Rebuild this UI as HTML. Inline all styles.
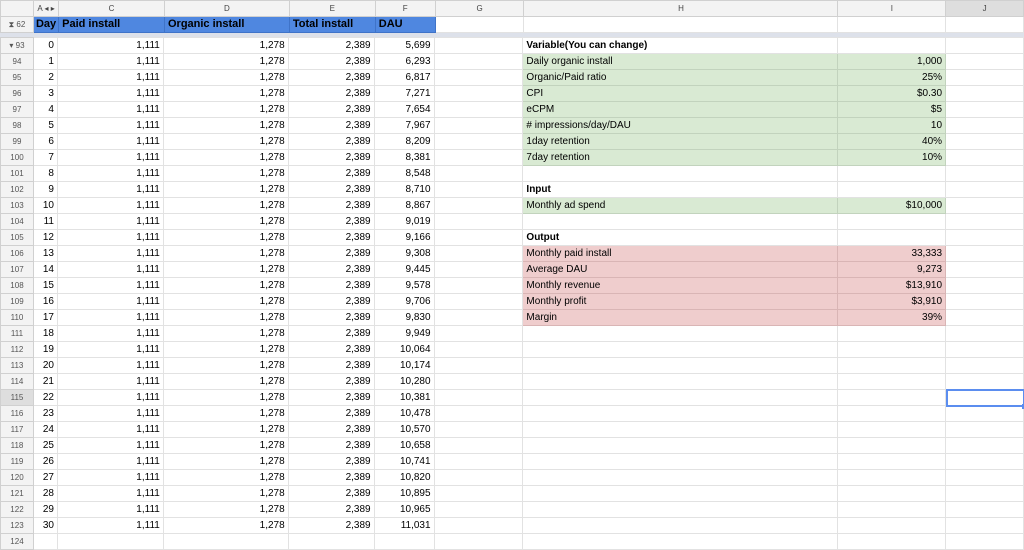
<!DOCTYPE html>
<html><head><meta charset="utf-8"><style>
html,body{margin:0;padding:0;background:#fff;width:1024px;height:543px;overflow:hidden}
body{font-family:"Liberation Sans",Arial,sans-serif;font-size:10px;color:#000}
table{border-collapse:collapse;table-layout:fixed;position:absolute;left:0}
td{border:1px solid #e2e2e2;height:15px;padding:0 3px;white-space:nowrap;overflow:hidden;line-height:15px}
td.r{text-align:right}
td.rh{background:#f3f3f3;color:#555;font-size:8px;text-align:center;border-color:#d0d0d0;padding:0}
.hdr td{background:#f3f3f3;color:#444;font-size:8px;text-align:center;border-color:#d0d0d0;height:15px;line-height:15px}
.blue td{background:#4f87e0;font-weight:bold;font-size:11px;border-color:#3f73c8}
.blue td.w{background:#fff;border-color:#e2e2e2}
.blue td.rh{background:#f3f3f3;color:#555;font-size:8px;font-weight:normal;border-color:#d0d0d0}
.g{background:#d9ead3;border-color:#c2d3bd}
.p{background:#efcdcd;border-color:#d9b5b5}
b{font-weight:bold}
#sep{position:absolute;left:0;top:33px;width:1024px;height:4px;background:#dde1ea}
#sel{position:absolute;left:946px;top:389px;width:75px;height:14px;border:2px solid #5b8def}
#sel:after{content:"";position:absolute;right:-4px;bottom:-4px;width:5px;height:5px;background:#5b8def}
</style></head><body>
<table style="top:0">
<colgroup><col style="width:33px"><col style="width:24px"><col style="width:106px"><col style="width:125px"><col style="width:86px"><col style="width:60px"><col style="width:89px"><col style="width:315px"><col style="width:108px"><col style="width:78px"></colgroup>
<tr class="hdr"><td></td><td>A ◂ ▸</td><td>C</td><td>D</td><td>E</td><td>F</td><td>G</td><td>H</td><td>I</td><td style="background:#dedede">J</td></tr>
<tr class="blue"><td class="rh">⧗ 62</td><td style="padding:0 2px">Day</td><td>Paid install</td><td>Organic install</td><td>Total install</td><td>DAU</td><td class="w"></td><td class="w"></td><td class="w"></td><td class="w"></td></tr>
</table>
<div id="sep"></div>
<table style="top:37px">
<colgroup><col style="width:33px"><col style="width:24px"><col style="width:106px"><col style="width:125px"><col style="width:86px"><col style="width:60px"><col style="width:89px"><col style="width:315px"><col style="width:108px"><col style="width:78px"></colgroup>
<tr><td class="rh">▾ 93</td><td class="r">0</td><td class="r">1,111</td><td class="r">1,278</td><td class="r">2,389</td><td class="r">5,699</td><td></td><td><b>Variable(You can change)</b></td><td></td><td></td></tr>
<tr><td class="rh">94</td><td class="r">1</td><td class="r">1,111</td><td class="r">1,278</td><td class="r">2,389</td><td class="r">6,293</td><td></td><td class="g">Daily organic install</td><td class="g r">1,000</td><td></td></tr>
<tr><td class="rh">95</td><td class="r">2</td><td class="r">1,111</td><td class="r">1,278</td><td class="r">2,389</td><td class="r">6,817</td><td></td><td class="g">Organic/Paid ratio</td><td class="g r">25%</td><td></td></tr>
<tr><td class="rh">96</td><td class="r">3</td><td class="r">1,111</td><td class="r">1,278</td><td class="r">2,389</td><td class="r">7,271</td><td></td><td class="g">CPI</td><td class="g r">$0.30</td><td></td></tr>
<tr><td class="rh">97</td><td class="r">4</td><td class="r">1,111</td><td class="r">1,278</td><td class="r">2,389</td><td class="r">7,654</td><td></td><td class="g">eCPM</td><td class="g r">$5</td><td></td></tr>
<tr><td class="rh">98</td><td class="r">5</td><td class="r">1,111</td><td class="r">1,278</td><td class="r">2,389</td><td class="r">7,967</td><td></td><td class="g"># impressions/day/DAU</td><td class="g r">10</td><td></td></tr>
<tr><td class="rh">99</td><td class="r">6</td><td class="r">1,111</td><td class="r">1,278</td><td class="r">2,389</td><td class="r">8,209</td><td></td><td class="g">1day retention</td><td class="g r">40%</td><td></td></tr>
<tr><td class="rh">100</td><td class="r">7</td><td class="r">1,111</td><td class="r">1,278</td><td class="r">2,389</td><td class="r">8,381</td><td></td><td class="g">7day retention</td><td class="g r">10%</td><td></td></tr>
<tr><td class="rh">101</td><td class="r">8</td><td class="r">1,111</td><td class="r">1,278</td><td class="r">2,389</td><td class="r">8,548</td><td></td><td></td><td></td><td></td></tr>
<tr><td class="rh">102</td><td class="r">9</td><td class="r">1,111</td><td class="r">1,278</td><td class="r">2,389</td><td class="r">8,710</td><td></td><td><b>Input</b></td><td></td><td></td></tr>
<tr><td class="rh">103</td><td class="r">10</td><td class="r">1,111</td><td class="r">1,278</td><td class="r">2,389</td><td class="r">8,867</td><td></td><td class="g">Monthly ad spend</td><td class="g r">$10,000</td><td></td></tr>
<tr><td class="rh">104</td><td class="r">11</td><td class="r">1,111</td><td class="r">1,278</td><td class="r">2,389</td><td class="r">9,019</td><td></td><td></td><td></td><td></td></tr>
<tr><td class="rh">105</td><td class="r">12</td><td class="r">1,111</td><td class="r">1,278</td><td class="r">2,389</td><td class="r">9,166</td><td></td><td><b>Output</b></td><td></td><td></td></tr>
<tr><td class="rh">106</td><td class="r">13</td><td class="r">1,111</td><td class="r">1,278</td><td class="r">2,389</td><td class="r">9,308</td><td></td><td class="p">Monthly paid install</td><td class="p r">33,333</td><td></td></tr>
<tr><td class="rh">107</td><td class="r">14</td><td class="r">1,111</td><td class="r">1,278</td><td class="r">2,389</td><td class="r">9,445</td><td></td><td class="p">Average DAU</td><td class="p r">9,273</td><td></td></tr>
<tr><td class="rh">108</td><td class="r">15</td><td class="r">1,111</td><td class="r">1,278</td><td class="r">2,389</td><td class="r">9,578</td><td></td><td class="p">Monthly revenue</td><td class="p r">$13,910</td><td></td></tr>
<tr><td class="rh">109</td><td class="r">16</td><td class="r">1,111</td><td class="r">1,278</td><td class="r">2,389</td><td class="r">9,706</td><td></td><td class="p">Monthly profit</td><td class="p r">$3,910</td><td></td></tr>
<tr><td class="rh">110</td><td class="r">17</td><td class="r">1,111</td><td class="r">1,278</td><td class="r">2,389</td><td class="r">9,830</td><td></td><td class="p">Margin</td><td class="p r">39%</td><td></td></tr>
<tr><td class="rh">111</td><td class="r">18</td><td class="r">1,111</td><td class="r">1,278</td><td class="r">2,389</td><td class="r">9,949</td><td></td><td></td><td></td><td></td></tr>
<tr><td class="rh">112</td><td class="r">19</td><td class="r">1,111</td><td class="r">1,278</td><td class="r">2,389</td><td class="r">10,064</td><td></td><td></td><td></td><td></td></tr>
<tr><td class="rh">113</td><td class="r">20</td><td class="r">1,111</td><td class="r">1,278</td><td class="r">2,389</td><td class="r">10,174</td><td></td><td></td><td></td><td></td></tr>
<tr><td class="rh">114</td><td class="r">21</td><td class="r">1,111</td><td class="r">1,278</td><td class="r">2,389</td><td class="r">10,280</td><td></td><td></td><td></td><td></td></tr>
<tr><td class="rh" style="background:#dedede">115</td><td class="r">22</td><td class="r">1,111</td><td class="r">1,278</td><td class="r">2,389</td><td class="r">10,381</td><td></td><td></td><td></td><td></td></tr>
<tr><td class="rh">116</td><td class="r">23</td><td class="r">1,111</td><td class="r">1,278</td><td class="r">2,389</td><td class="r">10,478</td><td></td><td></td><td></td><td></td></tr>
<tr><td class="rh">117</td><td class="r">24</td><td class="r">1,111</td><td class="r">1,278</td><td class="r">2,389</td><td class="r">10,570</td><td></td><td></td><td></td><td></td></tr>
<tr><td class="rh">118</td><td class="r">25</td><td class="r">1,111</td><td class="r">1,278</td><td class="r">2,389</td><td class="r">10,658</td><td></td><td></td><td></td><td></td></tr>
<tr><td class="rh">119</td><td class="r">26</td><td class="r">1,111</td><td class="r">1,278</td><td class="r">2,389</td><td class="r">10,741</td><td></td><td></td><td></td><td></td></tr>
<tr><td class="rh">120</td><td class="r">27</td><td class="r">1,111</td><td class="r">1,278</td><td class="r">2,389</td><td class="r">10,820</td><td></td><td></td><td></td><td></td></tr>
<tr><td class="rh">121</td><td class="r">28</td><td class="r">1,111</td><td class="r">1,278</td><td class="r">2,389</td><td class="r">10,895</td><td></td><td></td><td></td><td></td></tr>
<tr><td class="rh">122</td><td class="r">29</td><td class="r">1,111</td><td class="r">1,278</td><td class="r">2,389</td><td class="r">10,965</td><td></td><td></td><td></td><td></td></tr>
<tr><td class="rh">123</td><td class="r">30</td><td class="r">1,111</td><td class="r">1,278</td><td class="r">2,389</td><td class="r">11,031</td><td></td><td></td><td></td><td></td></tr>
<tr><td class="rh">124</td><td></td><td></td><td></td><td></td><td></td><td></td><td></td><td></td><td></td></tr>
</table>
<div id="sel"></div>
</body></html>
